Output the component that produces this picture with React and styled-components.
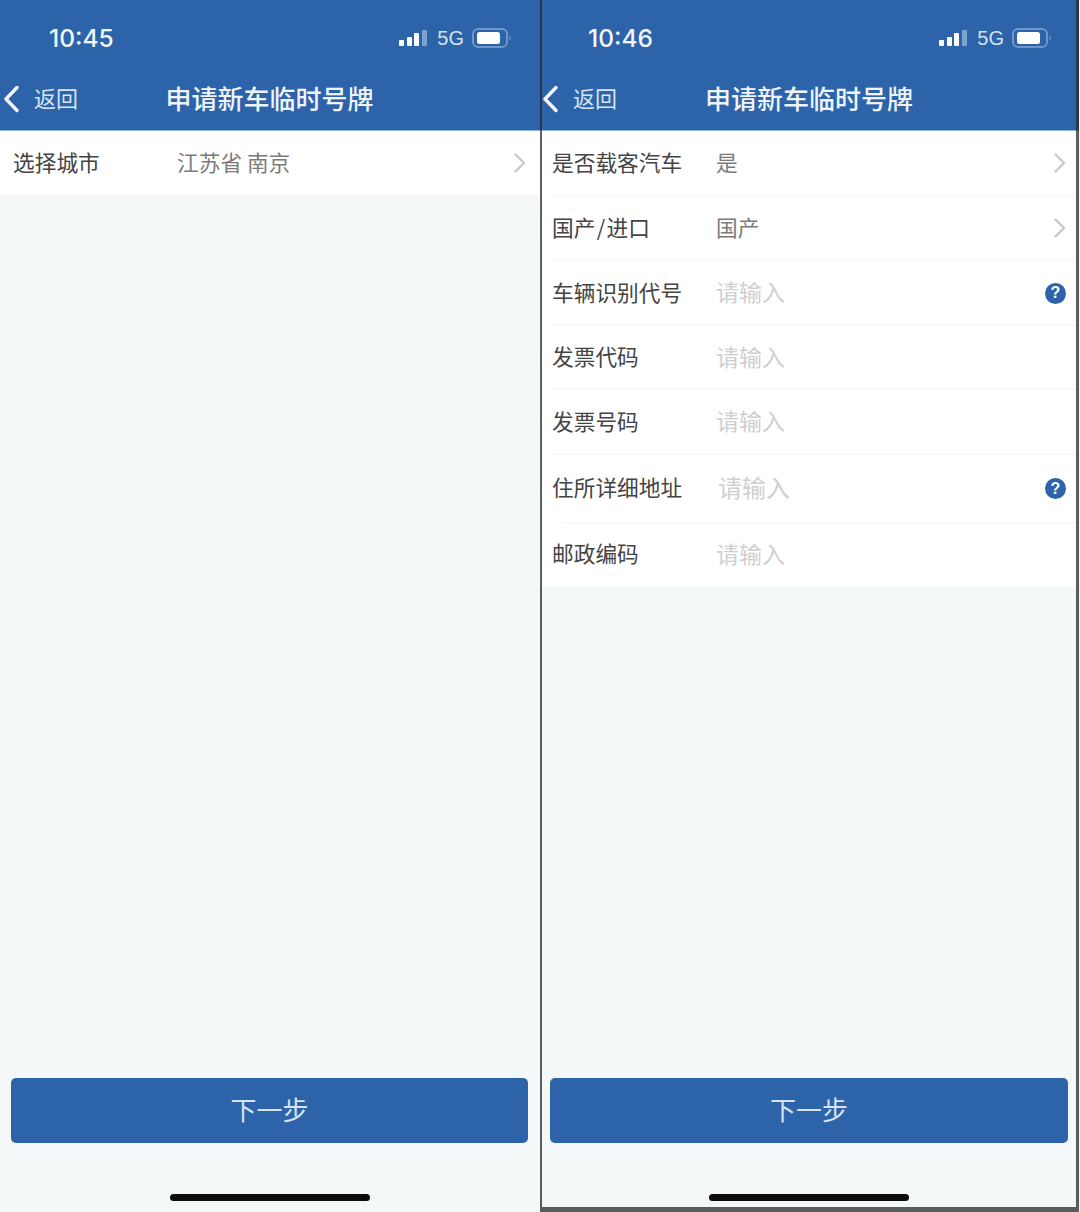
import React from 'react';
import styled, { createGlobalStyle } from 'styled-components';

const GlobalStyle = createGlobalStyle`
  html, body {
    margin: 0;
    padding: 0;
    background: #f4f8f9;
  }
  body {
    font-family: "Noto Sans CJK SC", "Liberation Sans", sans-serif;
  }
`;

const Page = styled.div`
  display: grid;
  grid-template-columns: 539px 541px;
  width: 1080px;
  height: 1212px;
  overflow: hidden;
`;

const Phone = styled.div`
  position: relative;
  display: flex;
  flex-direction: column;
  height: 1212px;
  background: #f4f8f9;

  ${props => props.$framed && `
    padding-right: 1px;

    &::after {
      content: '';
      position: absolute;
      top: 0;
      left: 1px;
      right: 1px;
      bottom: 0;
      border-left: 2px solid rgba(40, 40, 40, 0.75);
      border-right: 3px solid rgba(40, 40, 40, 0.75);
      border-bottom: 5px solid rgba(40, 40, 40, 0.75);
      pointer-events: none;
    }
  `}
`;

const Header = styled.div`
  background: #2c63a9;
  height: 130px;
  border-bottom: 1px solid #8fb4dc;
  color: #fff;
`;

const StatusBar = styled.div`
  display: flex;
  align-items: center;
  justify-content: space-between;
  height: 75px;
  padding: 0 27px 0 49px;
`;

const Time = styled.span`
  font-family: Inter, "Liberation Sans", sans-serif;
  font-size: 24.5px;
  font-weight: 500;
  color: #f2f6fb;
`;

const StatusIcons = styled.div`
  display: flex;
  align-items: center;
  gap: 10px;
`;

const NetworkLabel = styled.span`
  margin-right: -2px;
  padding-top: 1px;
  font-family: "Liberation Sans", sans-serif;
  font-size: 20px;
  color: #d3e0f0;
`;

const NavBar = styled.div`
  position: relative;
  display: flex;
  align-items: center;
  justify-content: center;
  height: 48px;
`;

const BackLink = styled.div`
  position: absolute;
  left: 3px;
  top: 0;
  bottom: 0;
  display: flex;
  align-items: center;
  gap: 15px;
  font-size: 22px;
  color: #d6e4f3;
`;

const BackText = styled.span`
  padding-bottom: 4px;
`;

const Title = styled.div`
  padding-bottom: 4px;
  font-size: 26px;
  font-weight: 500;
  color: #eef4fa;
`;

const List = styled.div`
  background: #fff;
`;

const Row = styled.div`
  display: flex;
  align-items: center;
  height: ${props => props.$height || 64}px;
  padding: 0 13px 0 13px;
  font-size: 21.7px;
`;

const Label = styled.span`
  flex: 0 0 164px;
  padding-bottom: 4px;
  color: #444;
  white-space: nowrap;
`;

const Value = styled.span`
  flex: 1;
  padding-bottom: 4px;
  color: #7b7b7b;
  white-space: pre;
`;

const Placeholder = styled.span`
  flex: 1;
  padding-bottom: 4px;
  padding-left: ${props => (props.$large ? 2 : 0)}px;
  color: #cfcfcf;
  font-size: ${props => (props.$large ? 24 : 23)}px;
`;

const Separator = styled.div`
  height: 1px;
  margin-left: ${props => props.$inset || 13}px;
  background: #f2f4f5;
`;

const HelpBadge = styled.span`
  display: flex;
  align-items: center;
  justify-content: center;
  width: 21px;
  height: 21px;
  border-radius: 50%;
  background: #2c63a9;
  color: #fff;
  font-family: "Liberation Sans", sans-serif;
  font-size: 16px;
  font-weight: 700;
`;

const Spacer = styled.div`
  flex: 1;
`;

const NextButton = styled.div`
  display: flex;
  align-items: center;
  justify-content: center;
  height: 65px;
  margin: 0 11px;
  padding-bottom: 4px;
  box-sizing: border-box;
  border-radius: 5px;
  background: #2c63a9;
  color: #d6e4f3;
  font-size: 26px;
`;

const HomeBar = styled.div`
  width: 200px;
  height: 7px;
  margin: 51px auto 11px;
  border-radius: 4px;
  background: #0c0c0c;
`;

const SignalIcon = () => (
  <svg width="28" height="18" viewBox="0 0 28 18">
    <rect x="0" y="11" width="5" height="6" rx="1" fill="#fff" />
    <rect x="8" y="8" width="5" height="9" rx="1" fill="#fff" />
    <rect x="15" y="4" width="5" height="13" rx="1" fill="#fff" />
    <rect x="23" y="1" width="5" height="16" rx="1" fill="#7fa3d0" />
  </svg>
);

const BatteryIcon = () => (
  <svg width="40" height="20" viewBox="0 0 40 20">
    <rect x="1" y="1" width="34" height="18" rx="5" fill="none" stroke="#6f97c9" strokeWidth="2" />
    <rect x="5" y="4" width="23" height="12" rx="2.5" fill="#fff" />
    <path d="M37.5 7.5c1.5.5 1.5 4.5 0 5z" fill="#7fa3d0" />
  </svg>
);

const BackIcon = () => (
  <svg width="16" height="28" viewBox="0 0 16 28">
    <path d="M14 2.5 3 14l11 11.5" fill="none" stroke="#f2f6fb" strokeWidth="3.4" strokeLinecap="round" strokeLinejoin="round" />
  </svg>
);

const ChevronIcon = () => (
  <svg width="12" height="20" viewBox="0 0 12 20">
    <path d="M1.5 1.5 10 10l-8.5 8.5" fill="none" stroke="#c9c9c9" strokeWidth="2.4" strokeLinecap="round" strokeLinejoin="round" />
  </svg>
);

const cityRows = [
  { label: '选择城市', value: '江苏省 南京', chevron: true },
];

const vehicleRows = [
  { label: '是否载客汽车', value: '是', chevron: true },
  { label: '国产\u200A/\u200A进口', value: '国产', chevron: true },
  { label: '车辆识别代号', help: true },
  { label: '发票代码', height: 63 },
  { label: '发票号码' },
  { label: '住所详细地址', help: true, large: true, height: 67, inset: 24 },
  { label: '邮政编码', height: 63 },
];

const Screen = ({ time, rows, framed }) => (
  <Phone $framed={framed}>
    <Header>
      <StatusBar>
        <Time>{time}</Time>
        <StatusIcons>
          <SignalIcon />
          <NetworkLabel>5G</NetworkLabel>
          <BatteryIcon />
        </StatusIcons>
      </StatusBar>
      <NavBar>
        <BackLink>
          <BackIcon />
          <BackText>返回</BackText>
        </BackLink>
        <Title>申请新车临时号牌</Title>
      </NavBar>
    </Header>
    <List>
      {rows.map((row, i) => (
        <React.Fragment key={row.label}>
          <Row $height={row.height}>
            <Label>{row.label}</Label>
            {row.value
              ? <Value>{row.value}</Value>
              : <Placeholder $large={row.large}>请输入</Placeholder>}
            {row.chevron && <ChevronIcon />}
            {row.help && <HelpBadge>?</HelpBadge>}
          </Row>
          {i < rows.length - 1 && <Separator $inset={row.inset} />}
        </React.Fragment>
      ))}
    </List>
    <Spacer />
    <NextButton>下一步</NextButton>
    <HomeBar />
  </Phone>
);

const App = () => (
  <>
    <GlobalStyle />
    <Page>
      <Screen time="10:45" rows={cityRows} />
      <Screen time="10:46" rows={vehicleRows} framed />
    </Page>
  </>
);

export default App;
